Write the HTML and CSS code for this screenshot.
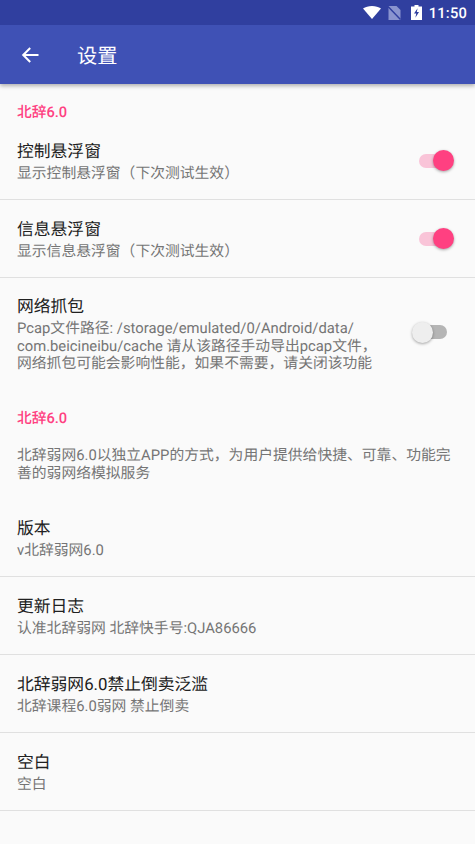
FILE: index.html
```html
<!DOCTYPE html>
<html lang="zh-CN">
<head>
<meta charset="utf-8">
<title>设置</title>
<link rel="stylesheet" href="styles.css">
</head>
<body>
<header class="appbar">
  <div class="status">
    <svg class="st-wifi" viewBox="0 0 18 13" width="18" height="13"><path d="M9 13 0 2.6C2.4 0.9 5.5 0 9 0s6.6 0.9 9 2.6z" fill="#fff"/></svg>
    <svg class="st-sim" viewBox="0 0 13 14" width="13" height="14"><path d="M0.5 0h8l4 4v10H0.5z" fill="#8a94cf"/><path d="M0 0.5 12.5 13.5" stroke="#303f9f" stroke-width="1.5"/></svg>
    <svg class="st-batt" viewBox="0 0 11 15" width="11" height="15"><path d="M3.5 0h4v1.5H11V15H0V1.5h3.5z" fill="#fff"/><path d="M6.6 3.2 3 8.6h2.2L4.4 12.8 8 7H5.8z" fill="#303f9f"/></svg>
    <span class="st-time">11:50</span>
  </div>
  <div class="toolbar">
    <svg class="back" viewBox="0 0 18 18" width="18" height="18"><path d="M17.5 9H2.5M9.2 2 2.2 9l7 7" fill="none" stroke="#fff" stroke-width="2"/></svg>
    <h1 class="title">设置</h1>
  </div>
</header>
<main class="list">
  <div class="cat cat-first">北辞6.0</div>
  <div class="row row-switch">
    <div class="text"><div class="t">控制悬浮窗</div><div class="s">显示控制悬浮窗（下次测试生效）</div></div>
    <span class="sw on"><i></i></span>
  </div>
  <div class="row row-switch">
    <div class="text"><div class="t">信息悬浮窗</div><div class="s">显示信息悬浮窗（下次测试生效）</div></div>
    <span class="sw on"><i></i></span>
  </div>
  <div class="row row-switch row-long">
    <div class="text"><div class="t">网络抓包</div><div class="s">Pcap文件路径: /storage/emulated/0/Android/data/<br>com.beicineibu/cache 请从该路径手动导出pcap文件，<br>网络抓包可能会影响性能，如果不需要，请关闭该功能</div></div>
    <span class="sw off"><i></i></span>
  </div>
  <div class="cat cat-second">北辞6.0</div>
  <div class="about s">北辞弱网6.0以独立APP的方式，为用户提供给快捷、可靠、功能完善的弱网络模拟服务</div>
  <div class="row"><div class="text"><div class="t">版本</div><div class="s">v北辞弱网6.0</div></div></div>
  <div class="row"><div class="text"><div class="t">更新日志</div><div class="s">认准北辞弱网 北辞快手号:QJA86666</div></div></div>
  <div class="row"><div class="text"><div class="t">北辞弱网6.0禁止倒卖泛滥</div><div class="s">北辞课程6.0弱网 禁止倒卖</div></div></div>
  <div class="row"><div class="text"><div class="t">空白</div><div class="s">空白</div></div></div>
</main>
</body>
</html>
```
FILE: styles.css
```css
* { box-sizing: border-box; }
html, body { margin: 0; padding: 0; height: 844px; overflow: hidden; }
body {
  background: #fafafa;
  font-family: Roboto, "Noto Sans CJK SC", sans-serif;
  color: #212121;
  text-rendering: geometricPrecision;
}
.appbar { box-shadow: 0 2px 4px rgba(0,0,0,.3); position: relative; }
.status {
  height: 25px; background: #303f9f; display: flex; align-items: center;
  justify-content: flex-end; padding-right: 8px; color: #fff;
}
.st-wifi { margin-right: 7px; }
.st-sim { margin-right: 10px; }
.st-batt { margin-right: 7px; }
.st-time { font-size: 14.7px; font-weight: 500; letter-spacing: .2px; }
.toolbar { height: 59px; background: #3f51b5; display: flex; align-items: center; padding-left: 21px; }
.title { margin: 0 0 0 38px; font-size: 20.2px; font-weight: 400; color: #fff; }
.cat { font-size: 14.7px; font-weight: 500; color: #ff4081; padding-left: 17px; line-height: 20px; }
.cat-first { padding-top: 18px; height: 38px; }
.cat-second { margin-top: 22px; height: 20px; }
.row {
  height: 78px; display: flex; align-items: center; justify-content: space-between;
  padding: 0 17px; border-bottom: 1px solid #e0e0e0;
}
.row-long { height: 108px; border-bottom: 0; padding-top: 2px; }
.text { padding-top: 3px; }
.t { font-size: 16.8px; line-height: 22px; margin-bottom: 2px; color: #212121; }
.s { font-size: 14.8px; line-height: 17.7px; color: #757575; }
.about { padding: 19px 17px 0; height: 71px; }
.sw { position: relative; display: block; width: 32px; height: 14px; border-radius: 7px; flex: none; }
.sw i { position: absolute; top: -3.5px; width: 21px; height: 21px; border-radius: 50%; box-shadow: 0 1px 3px rgba(0,0,0,.35); }
.sw.on { background: #f9c4d8; margin-right: 7px; }
.sw.on i { right: -2.5px; background: #ff4081; }
.sw.off { background: #b5b5b5; margin-right: 11px; margin-top: -2px; }
.sw.off i { left: -3.5px; background: #eeeeee; }
```
